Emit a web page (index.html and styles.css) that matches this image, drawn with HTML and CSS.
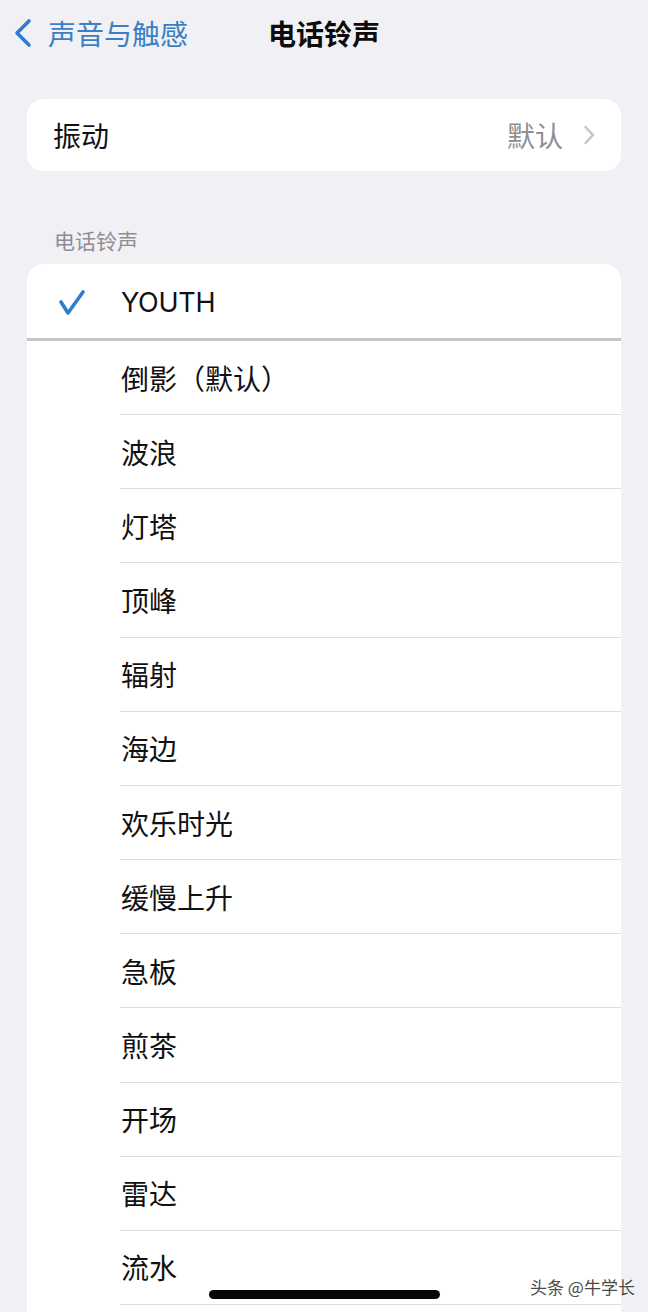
FILE: index.html
```html
<!DOCTYPE html>
<html lang="zh-CN">
<head>
<meta charset="utf-8">
<title>电话铃声</title>
<link rel="stylesheet" href="styles.css">
</head>
<body>
<div class="screen">
  <header class="nav">
    <div class="back">
      <svg class="back-icon" width="22" height="30" viewBox="0 0 22 30"><path d="M16 3 L4 15 L16 27" fill="none" stroke="#2f7dd0" stroke-width="3.6" stroke-linecap="round" stroke-linejoin="round"/></svg>
      <span class="back-text">声音与触感</span>
    </div>
    <h1 class="title">电话铃声</h1>
  </header>

  <section class="card card-single">
    <div class="vib-row">
      <span class="vib-label">振动</span>
      <span class="vib-value">默认</span>
      <svg class="chev" width="12" height="20" viewBox="0 0 12 20"><path d="M2.5 2 L10 10 L2.5 18" fill="none" stroke="#c4c4c8" stroke-width="2.4" stroke-linecap="round" stroke-linejoin="round"/></svg>
    </div>
  </section>

  <div class="section-header">电话铃声</div>

  <section class="card card-list">
    <div class="row row-selected">
      <div class="check-cell">
        <svg width="28" height="26" viewBox="0 0 28 26"><path d="M3 12 L10 23 L25 2" fill="none" stroke="#2f7dd0" stroke-width="3.6" stroke-linecap="round" stroke-linejoin="round"/></svg>
      </div>
      <span class="row-label latin">YOUTH</span>
    </div>
    <div class="row"><span class="row-label">倒影（默认）</span></div>
    <div class="row"><span class="row-label">波浪</span></div>
    <div class="row"><span class="row-label">灯塔</span></div>
    <div class="row"><span class="row-label">顶峰</span></div>
    <div class="row"><span class="row-label">辐射</span></div>
    <div class="row"><span class="row-label">海边</span></div>
    <div class="row"><span class="row-label">欢乐时光</span></div>
    <div class="row"><span class="row-label">缓慢上升</span></div>
    <div class="row"><span class="row-label">急板</span></div>
    <div class="row"><span class="row-label">煎茶</span></div>
    <div class="row"><span class="row-label">开场</span></div>
    <div class="row"><span class="row-label">雷达</span></div>
    <div class="row"><span class="row-label">流水</span></div>
  </section>

  <div class="home-indicator"></div>
  <div class="watermark">头条 @牛学长</div>
</div>
</body>
</html>
```

FILE: styles.css
```css
* { box-sizing: border-box; }
html, body {
  margin: 0;
  padding: 0;
  background: #f0f0f5;
}
body {
  font-family: "Noto Sans CJK SC", "Noto Sans", sans-serif;
  color: #111;
}
.screen {
  position: relative;
  width: 648px;
  height: 1312px;
  overflow: hidden;
  background: #f0f0f5;
}
.nav {
  height: 66px;
  display: flex;
  align-items: center;
  padding-left: 13px;
}
.back {
  display: flex;
  align-items: center;
  gap: 13px;
  width: 255px;
}
.back-icon { display: block; }
.back-text {
  font-size: 28px;
  line-height: 34px;
  color: #3a7fc4;
}
.title {
  margin: 0;
  font-size: 28px;
  line-height: 34px;
  font-weight: 700;
  color: #0c0c0c;
}
.card {
  margin: 0 27px;
  background: #fff;
  border-radius: 16px;
}
.card-single {
  margin-top: 33px;
}
.vib-row {
  height: 72px;
  display: flex;
  align-items: center;
  padding: 0 26px 0 26px;
}
.vib-label {
  font-size: 28px;
  line-height: 34px;
  flex: 1;
}
.vib-value {
  font-size: 28px;
  line-height: 34px;
  color: #8e8e93;
  margin-right: 20px;
}
.chev { display: block; }
.section-header {
  padding: 55px 0 10px 54px;
  font-size: 21px;
  line-height: 28px;
  color: #8d8d92;
}
.card-list {
  border-radius: 16px 16px 0 0;
  padding-bottom: 40px;
}
.row {
  height: 74.17px;
  margin-left: 93px;
  display: flex;
  align-items: center;
  padding-left: 1px;
  border-bottom: 1px solid #dedee2;
}
.row-selected {
  height: 77px;
  margin-left: 0;
  padding-left: 0;
  padding-top: 3px;
  border-bottom: 3px solid #c6c6c9;
}
.check-cell {
  width: 94px;
  display: flex;
  justify-content: flex-start;
  padding-left: 31px;
}
.check-cell svg { display: block; }
.row-label {
  font-size: 28px;
  line-height: 34px;
  color: #111;
}
.latin {
  font-family: "Inter", "Noto Sans", sans-serif;
  font-size: 27px;
  letter-spacing: -0.3px;
}
.home-indicator {
  position: absolute;
  left: 209px;
  top: 1290px;
  width: 231px;
  height: 9px;
  border-radius: 5px;
  background: #050505;
}
.watermark {
  position: absolute;
  left: 530px;
  top: 1276px;
  font-size: 17px;
  line-height: 22px;
  color: #4a4a4a;
  text-shadow: 0 0 2px #fff, 0 0 2px #fff, 1px 1px 1px #fff;
  white-space: nowrap;
}
```
